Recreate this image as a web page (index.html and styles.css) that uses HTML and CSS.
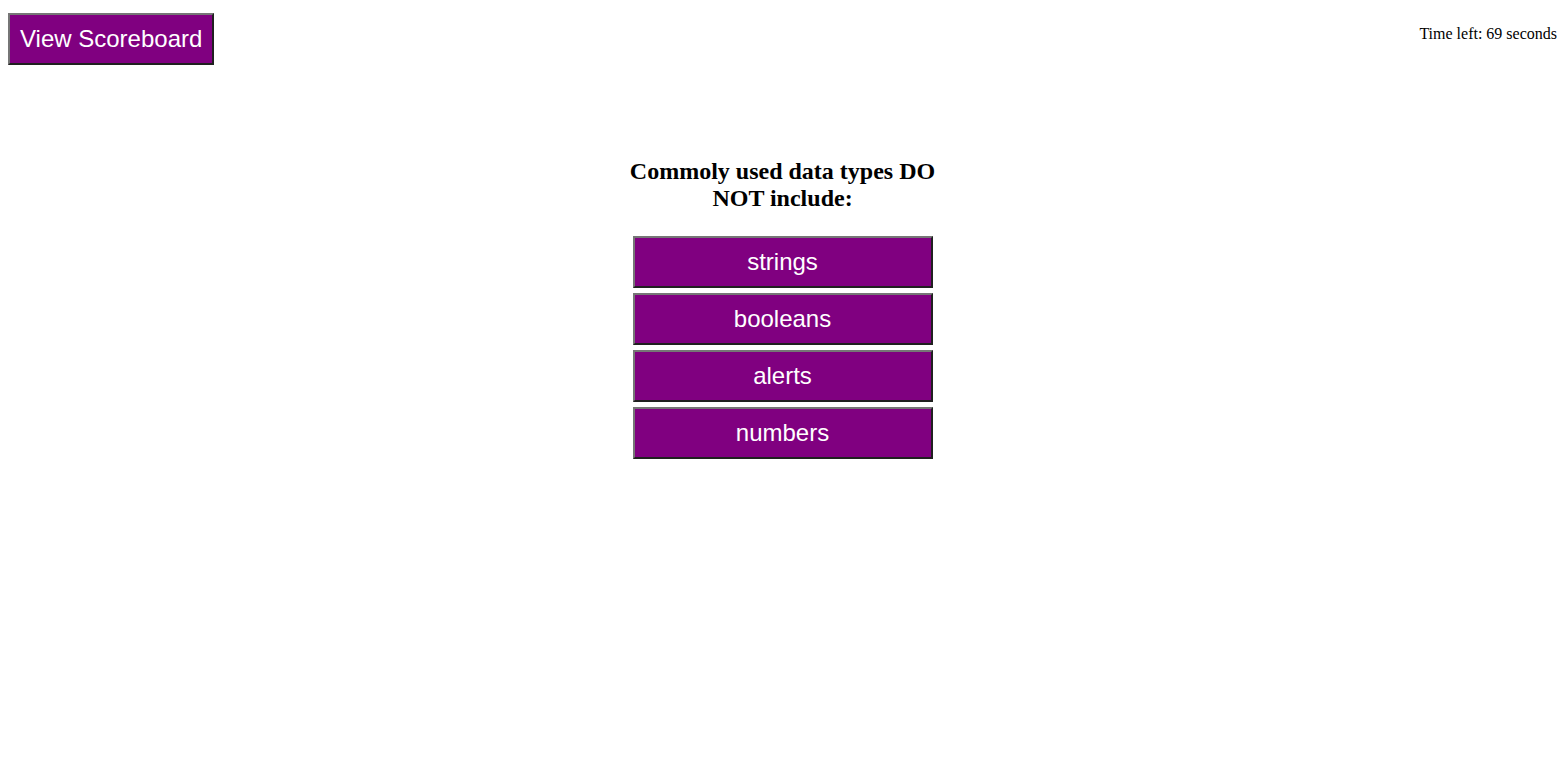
FILE: index.html
```html
<!DOCTYPE html>
<html>
<head>
<meta charset="utf-8">
<link rel="stylesheet" href="styles.css">
</head>
<body>
<header class="top">
  <button class="btn score-btn">View Scoreboard</button>
  <div class="timer">Time left: 69 seconds</div>
</header>
<main class="quiz">
  <h2 class="question">Commoly used data types DO NOT include:</h2>
  <div class="answers">
    <button class="btn answer">strings</button>
    <button class="btn answer">booleans</button>
    <button class="btn answer">alerts</button>
    <button class="btn answer">numbers</button>
  </div>
</main>
</body>
</html>
```
FILE: styles.css
```css
html, body {
  background: #ffffff;
}
body {
  margin: 8px;
  font-family: "Liberation Serif", "Times New Roman", serif;
  color: #000;
}
.top {
  display: flex;
  justify-content: space-between;
  align-items: flex-start;
}
.btn {
  font-family: "Liberation Sans", Arial, sans-serif;
  font-size: 24px;
  line-height: 28px;
  color: #ffffff;
  background: #800080;
  border-width: 2px;
  border-style: solid;
  border-color: #767676 #202020 #202020 #767676;
  padding: 10px 10px;
  margin: 0;
  cursor: pointer;
}
.score-btn {
  margin-top: 5px;
}
.timer {
  font-size: 16px;
  line-height: 18px;
  padding-top: 17px;
}
.quiz {
  display: flex;
  flex-direction: column;
  align-items: center;
  padding-top: 93px;
}
.question {
  width: 310px;
  margin: 0 0 24px;
  text-align: center;
  font-size: 24px;
  line-height: 27px;
  font-weight: bold;
}
.answers {
  display: flex;
  flex-direction: column;
  gap: 5px;
  width: 300px;
}
.answer {
  width: 300px;
}
```
